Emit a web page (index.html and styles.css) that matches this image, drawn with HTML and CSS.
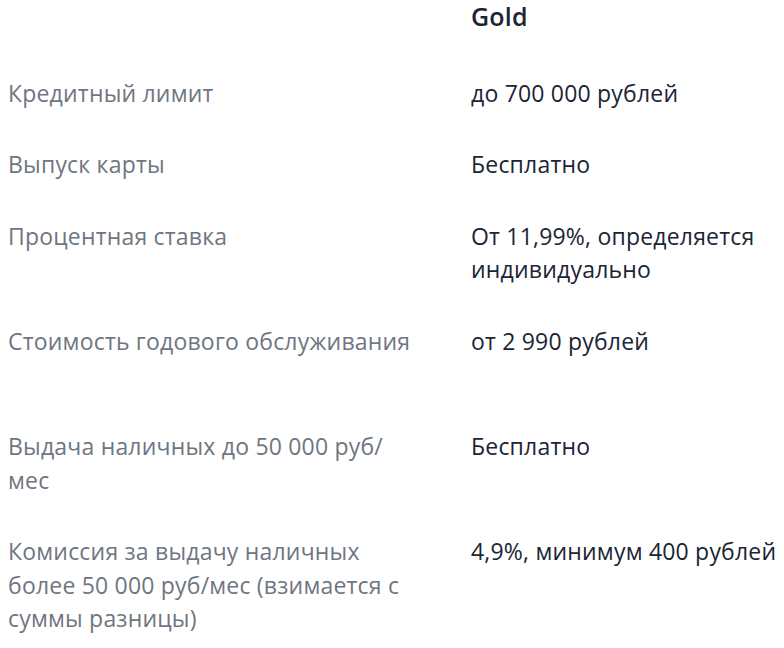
FILE: index.html
```html
<!DOCTYPE html>
<html lang="ru">
<head>
<meta charset="utf-8">
<link rel="stylesheet" href="styles.css">
</head>
<body>
<div class="table">
  <div class="label head-empty"></div>
  <div class="value head">Gold</div>

  <div class="label">Кредитный лимит</div>
  <div class="value">до 700 000 рублей</div>

  <div class="label">Выпуск карты</div>
  <div class="value">Бесплатно</div>

  <div class="label">Процентная ставка</div>
  <div class="value">От 11,99%, определяется индивидуально</div>

  <div class="label tall">Стоимость годового обслуживания</div>
  <div class="value tall">от 2 990 рублей</div>

  <div class="label">Выдача наличных до 50 000 руб/<wbr>мес</div>
  <div class="value">Бесплатно</div>

  <div class="label">Комиссия за выдачу наличных более 50 000 руб/мес (взимается с суммы разницы)</div>
  <div class="value">4,9%, минимум 400 рублей</div>
</div>
</body>
</html>
```
FILE: styles.css
```css
html, body {
  margin: 0;
  padding: 0;
  background: #ffffff;
}
body {
  font-family: "Open Sans", "Noto Sans", sans-serif;
  font-size: 23px;
  line-height: 33.5px;
  letter-spacing: 0.2px;
}
.table {
  display: grid;
  grid-template-columns: 404px 1fr;
  column-gap: 59px;
  row-gap: 38px;
  padding: 0 0 0 8px;
}
.label {
  color: #6f7681;
}
.value {
  color: #1b2535;
}
.head {
  font-weight: 600;
  font-size: 25px;
  margin-bottom: 5px;
}
.tall {
  padding-bottom: 34px;
}
```
